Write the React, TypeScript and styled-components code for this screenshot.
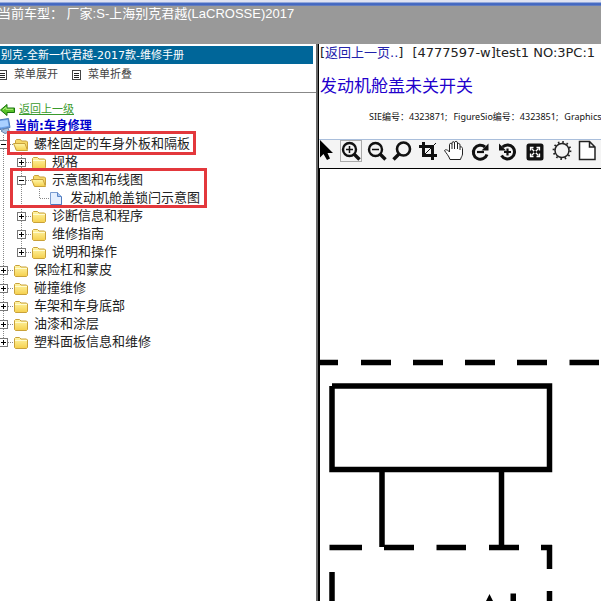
import React from "react";
import styled, { createGlobalStyle } from "styled-components";

const Global = createGlobalStyle`
  *, *::before, *::after { box-sizing: border-box; }
  body {
    margin: 0;
    background: #fff;
    color: #222;
    font: 13px/18px "DejaVu Sans", "Noto Sans CJK SC", sans-serif;
    overflow: hidden;
  }
  button { font: inherit; color: inherit; background: none; border: 0; padding: 0; margin: 0; cursor: pointer; }
`;

const Page = styled.div`
  display: flex;
  flex-direction: column;
  height: 100vh;
  overflow: hidden;
`;

const Header = styled.header`
  flex: none;
  height: 44px;
  background: #999;
  color: #fff;
  font: 13px/16px "Liberation Sans", "Noto Sans CJK SC", sans-serif;
  white-space: nowrap;
  overflow: hidden;
  &::before {
    content: "";
    display: block;
    height: 6px;
    background: linear-gradient(#dfe3f3 0 2px, #4a6fc4 3px, #4165c0 5px, #8093bd 6px);
  }
`;

const HeaderText = styled.div`
  margin-left: -2px;
`;

const Frames = styled.div`
  flex: 1;
  min-height: 0;
  display: flex;
`;

const Sidebar = styled.aside`
  flex: none;
  width: 316px;
  padding-top: 2px;
  overflow: hidden;
  white-space: nowrap;
`;

const ManualTitle = styled.h2`
  margin: 0 3px 0 0;
  height: 18px;
  padding-left: 1px;
  background: #069;
  color: #fff;
  font-size: 11px;
  font-weight: 400;
  line-height: 19px;
`;

const MenuBar = styled.div`
  display: flex;
  gap: 14px;
  height: 28px;
  margin-left: -2px;
  color: #444;
  font-size: 11px;
  line-height: 22px;
`;

const MenuButton = styled.button`
  display: flex;
  align-items: center;
  gap: 6px;
  height: 22px;
`;

const TreePane = styled.nav`
  border-top: 1px solid #888;
  padding-top: 9px;
`;

const BackRow = styled.div`
  display: flex;
  align-items: center;
  gap: 4px;
  height: 16px;
  font-size: 11px;
`;

const BackLink = styled.a`
  color: #3a9a2c;
`;

const CurrentLink = styled.a`
  color: #00c;
  font-size: 12px;
  font-weight: 700;
`;

const Tree = styled.div`
  padding-top: 1px;
`;

const Marked = styled.div<{ $left: number; $width: number; $up?: boolean }>`
  position: relative;
  &::after {
    content: "";
    position: absolute;
    left: ${(p) => p.$left}px;
    width: ${(p) => p.$width}px;
    top: ${(p) => (p.$up ? -4 : -3)}px;
    bottom: ${(p) => (p.$up ? -2 : -1)}px;
    border: 3px solid #e3383c;
    pointer-events: none;
  }
`;

const TreeRow = styled.div`
  display: flex;
  align-items: center;
  height: 18px;
`;

const Label = styled.button`
  margin-left: 5px;
`;

const Divider = styled.div`
  flex: none;
  width: 3px;
  background: linear-gradient(90deg, #666 0 2px, #000 2px);
`;

const Content = styled.main`
  flex: 1;
  min-width: 0;
  display: flex;
  flex-direction: column;
  overflow: hidden;
  white-space: nowrap;
`;

const Crumb = styled.div`
  display: flex;
  gap: 9px;
  margin-left: 1px;
  line-height: 18px;
`;

const PageLink = styled.a`
  color: #22a;
  text-decoration: none;
`;

const Title = styled.h1`
  margin: 12px 0 0 1px;
  color: #20c;
  font-size: 17px;
  font-weight: 400;
  line-height: 24px;
`;

const Codes = styled.p`
  display: flex;
  gap: 6px;
  margin: 11px 0 0 50px;
  color: #111;
  font: 9px/16px "Noto Sans", "Noto Sans CJK SC", sans-serif;
`;

const Toolbar = styled.div`
  flex: none;
  display: flex;
  align-items: flex-start;
  gap: 4px;
  height: 30px;
  margin-top: 14px;
  background: #f4f4f4;
  border-top: 1px solid #a9bedb;
  border-bottom: 1px solid #000;
`;

const Tool = styled.button<{ $on?: boolean; $width?: number }>`
  flex: none;
  display: flex;
  width: ${(p) => p.$width ?? 22}px;
  height: 22px;
  outline: ${(p) => (p.$on ? "1px solid #aaa" : "none")};
  outline-offset: -1px;
`;

const Canvas = styled.div`
  flex: 1;
  min-height: 0;
  border-left: 1px solid #000;
  overflow: hidden;
  svg { display: block; }
`;

function ListIcon() {
  return (
    <svg width="10" height="10" viewBox="0 0 10 10" shapeRendering="crispEdges">
      <rect x="0.5" y="0.5" width="8" height="9" fill="#fff" stroke="#444" />
      <path d="M2 3.5h5M2 5.5h5M2 7.5h5" stroke="#222" />
    </svg>
  );
}

function Arrow() {
  return (
    <svg width="15" height="14" viewBox="0 0 15 14">
      <path d="M0.5 7 7 1.5V5H14.5V9.5H7V12.5Z" fill="#59c22a" stroke="#18720e" />
      <path d="M3 6.8 6 4.2V6.3H13" fill="none" stroke="#b5ee82" />
    </svg>
  );
}

function Computer() {
  return (
    <svg width="11" height="16" viewBox="0 0 11 16">
      <path d="M-1 2 8.5 0.5 10 9.5 0 11.5Z" fill="#6ea3e8" stroke="#4c78b6" />
      <path d="M0 3 7.5 2 8.5 8 0 9.5Z" fill="#a9d0ff" />
      <path d="M4 11 8 10 9.5 14 5 15.5 1 13Z" fill="#a9c3e2" stroke="#6685ad" />
    </svg>
  );
}

type Kind = "open" | "closed" | "file";

/* The expand box with the dotted guides that run into it. */
function Joint({ mark, down }: { mark: "+" | "-" | ""; down: boolean }) {
  return (
    <svg width="13" height="18" viewBox="5 0 13 18" shapeRendering="crispEdges">
      <path d="M8.5 0V9" stroke="#888" strokeDasharray="1 1" />
      {down && <path d="M8.5 10V18" stroke="#888" strokeDasharray="1 1" />}
      <path d="M9 9.5H18" stroke="#888" strokeDasharray="1 1" />
      {mark && <rect x="4.5" y="5.5" width="8" height="8" fill="#fff" stroke="#777" />}
      {mark && <path d="M6 9.5h5" stroke="#000" />}
      {mark === "+" && <path d="M8.5 7v5" stroke="#000" />}
    </svg>
  );
}

function Glyph({ kind }: { kind: Kind }) {
  if (kind === "file") {
    return (
      <svg width="16" height="18" viewBox="0 0 16 18">
        <path d="M1.5 3.5H8.5L12.5 7.5V15.5H1.5Z" fill="#e4efff" stroke="#7a9cd0" />
        <path d="M8.5 3.5V7.5H12.5" fill="#a9c6f0" stroke="#5b86c6" />
        <path d="M2 15.5H12.5V8" fill="none" stroke="#4f79bd" />
      </svg>
    );
  }
  return (
    <svg width="16" height="18" viewBox="0 0 16 18">
      <defs>
        <linearGradient id="fold" x1="0" y1="0" x2="0" y2="1">
          <stop offset="0" stopColor="#fff6a8" />
          <stop offset="1" stopColor="#f5cf4c" />
        </linearGradient>
      </defs>
      {kind === "closed" ? (
        <>
          <path d="M1.5 14.5V5.5L2.5 4.5H6.5L8 6H13.5L14.5 7V14.5L13.5 15.5H2.5Z" fill="url(#fold)" stroke="#c9a13a" />
          <path d="M2 7.5H14" stroke="#fffbd0" />
        </>
      ) : (
        <>
          <path d="M2.5 14V5.5L3.5 4.5H7.5L8.5 6H13.5L14.5 7V14Z" fill="#f6d868" stroke="#c9a13a" />
          <path d="M0.5 8.5H12L14.5 15.5H3.5Z" fill="url(#fold)" stroke="#c9a13a" />
        </>
      )}
    </svg>
  );
}

function Guides({ lines }: { lines: boolean[] }) {
  return (
    <>
      {lines.map((on, i) => (
        <svg key={i} width="18" height="18" viewBox="5 0 18 18" shapeRendering="crispEdges">
          {on && <path d="M8.5 0V18" stroke="#888" strokeDasharray="1 1" />}
        </svg>
      ))}
    </>
  );
}

/* A joint is 13px wide; nested ones may draw one pixel into the guide before. */
const Joints = styled.span`
  display: flex;
  svg { overflow: visible; }
`;

type NodeProps = { lines?: boolean[]; mark: "+" | "-" | ""; kind: Kind; down?: boolean; text: string };

function Node({ lines = [], mark, kind, down = true, text }: NodeProps) {
  return (
    <TreeRow>
      <Joints>
        <Guides lines={lines} />
        <Joint mark={mark} down={down} />
      </Joints>
      <Glyph kind={kind} />
      <Label>{text}</Label>
    </TreeRow>
  );
}

const tools: { name: string; on?: boolean; width?: number; art: React.ReactNode }[] = [
  { name: "选择", width: 17, art: <path d="M1 0V17.5L4.5 14L8 20L11 18.5L8.5 13H14Z" fill="#000" /> },
  {
    name: "放大", on: true,
    art: <g fill="none" stroke="#111"><circle cx="9.5" cy="9.5" r="6.5" strokeWidth="2.4" /><path d="M14 14 19.5 19.5" strokeWidth="3.4" /><path d="M6 9.5h7M9.5 6v7" strokeWidth="1.5" /></g>,
  },
  {
    name: "缩小",
    art: <g fill="none" stroke="#111"><circle cx="9.5" cy="9.5" r="6.5" strokeWidth="2.4" /><path d="M14 14 19.5 19.5" strokeWidth="3.4" /><path d="M6 9.5h7" strokeWidth="1.5" /></g>,
  },
  {
    name: "查找",
    art: <g fill="none" stroke="#111"><circle cx="11.5" cy="9" r="6.5" strokeWidth="2.6" /><path d="M7 14 1.5 19.5" strokeWidth="3.4" /></g>,
  },
  {
    name: "裁剪",
    art: <g fill="none" stroke="#111"><path d="M5.5 2V15.5H19M1 6.5H14.5V20" strokeWidth="3" /><path d="M7 14 18 3" strokeWidth="1" /></g>,
  },
  {
    name: "平移",
    art: <path d="M6 19.5C5 16 2 13 .5 10.5C1.5 9 4 10 5.500 12V4.5C5.5 3 8 3 8 4.5V3C8 1.2 10.5 1.2 10.5 3V2.5C11 .8 13.5 1 13.5 3V4C14.5 2.8 16 3.5 16 5V7C17 6.5 18.500 7 18.5 8.5V14C18.5 16 17 17 16.5 19.5ZM8 4.5V9M10.5 3V9M13.5 4V9M16 7V10" fill="#fff" stroke="#222" />,
  },
  {
    name: "顺时针旋转",
    art: <g fill="none" stroke="#111"><path d="M17 14.5A7 7 0 1 1 15 7" strokeWidth="3" /><path d="M18.5 3.5V10.5H11.5Z" fill="#111" stroke="none" /><path d="M7 12H14" strokeWidth="2.2" /></g>,
  },
  {
    name: "逆时针旋转", width: 23,
    art: <g fill="none" stroke="#111"><path d="M5.5 15.5A7 7 0 1 0 6.5 7" strokeWidth="3" /><path d="M3 3.5V10.5H10Z" fill="#111" stroke="none" /><path d="M8 12H15M11.5 8.5V15.5" strokeWidth="2.2" /></g>,
  },
  {
    name: "全屏", width: 23,
    art: <g transform="translate(3 0)"><rect x="0.5" y="3.5" width="17" height="17" rx="2.5" fill="#111" /><path d="M5.5 8.5 12.5 15.5M12.5 8.5 5.5 15.5" stroke="#fff" strokeWidth="1.3" /><path d="M4.5 10.5V7.5H7.5M10.5 7.5H13.5V10.5M13.5 13.5V16.5H10.5M7.5 16.5H4.5V13.5" fill="none" stroke="#fff" strokeWidth="1.3" /><rect x="8" y="11" width="2" height="2" fill="#111" /></g>,
  },
  {
    name: "亮度", width: 23,
    art: <g fill="none" stroke="#222"><circle cx="12" cy="10.5" r="7" strokeWidth="1.5" /><circle cx="12" cy="10.5" r="8.4" strokeWidth="2" strokeDasharray="1.6 2.8" /></g>,
  },
  {
    name: "新建",
    art: <path d="M2.5 1.5H12.5L18 7V19.5H2.5ZM12.5 1.5V7H18" fill="#fff" stroke="#222" strokeWidth="1.5" />,
  },
];

export default function App() {
  return (
    <Page>
      <Global />
      <Header>
        <HeaderText>当前车型： 厂家:S-上海别克君越(LaCROSSE)2017</HeaderText>
      </Header>
      <Frames>
        <Sidebar>
          <ManualTitle>别克-全新一代君越-2017款-维修手册</ManualTitle>
          <MenuBar>
            <MenuButton><ListIcon />菜单展开</MenuButton>
            <MenuButton><ListIcon />菜单折叠</MenuButton>
          </MenuBar>
          <TreePane>
            <BackRow><Arrow /><BackLink href="#up">返回上一级</BackLink></BackRow>
            <BackRow><Computer /><CurrentLink href="#current">当前:车身修理</CurrentLink></BackRow>
            <Tree>
              <Marked $left={7} $width={189} $up>
                <Node mark="-" kind="open" text="螺栓固定的车身外板和隔板" />
              </Marked>
              <Node lines={[true]} mark="+" kind="closed" text="规格" />
              <Marked $left={10} $width={197}>
                <Node lines={[true]} mark="-" kind="open" text="示意图和布线图" />
                <Node lines={[true, true]} mark="" kind="file" down={false} text="发动机舱盖锁闩示意图" />
              </Marked>
              <Node lines={[true]} mark="+" kind="closed" text="诊断信息和程序" />
              <Node lines={[true]} mark="+" kind="closed" text="维修指南" />
              <Node lines={[true]} mark="+" kind="closed" down={false} text="说明和操作" />
              <Node mark="+" kind="closed" text="保险杠和蒙皮" />
              <Node mark="+" kind="closed" text="碰撞维修" />
              <Node mark="+" kind="closed" text="车架和车身底部" />
              <Node mark="+" kind="closed" text="油漆和涂层" />
              <Node mark="+" kind="closed" down={false} text="塑料面板信息和维修" />
            </Tree>
          </TreePane>
        </Sidebar>
        <Divider />
        <Content>
          <Crumb>
            <span>[<PageLink href="#back">返回上一页..</PageLink>]</span>
            <span>[4777597-w]test1 NO:3PC:1</span>
          </Crumb>
          <Title>发动机舱盖未关开关</Title>
          <Codes>
            <span>SIE编号：4323871;</span>
            <span>FigureSio编号：4323851;</span>
            <span>Graphics</span>
          </Codes>
          <Toolbar>
            {tools.map((t) => (
              <Tool key={t.name} aria-label={t.name} $on={t.on} $width={t.width}>
                <svg width={t.width ?? 22} height="22">{t.art}</svg>
              </Tool>
            ))}
          </Toolbar>
          <Canvas>
            <svg width="282" height="432" viewBox="320 169 282 432" stroke="#000" strokeWidth="5.5" fill="none">
              <path d="M320 362.5H338M361 362.5H391M413 362.5H443M465 362.5H495M517 362.5H547M569.5 362.5H599" />
              <path d="M332 386H549.5V469.5H332V386" />
              <path d="M382 469V547M501.5 469V547" />
              <path d="M329.5 547.5H362M384 547.5H414M436.5 547.5H466M489 547.5H519M541 547.5H552" />
              <path d="M549.5 545V569M549.5 591V601M332 572V601" />
              <path d="M489.5 594 493 601H486ZM510.5 593.5H516V601H510.5Z" fill="#000" stroke="none" />
            </svg>
          </Canvas>
        </Content>
      </Frames>
    </Page>
  );
}
